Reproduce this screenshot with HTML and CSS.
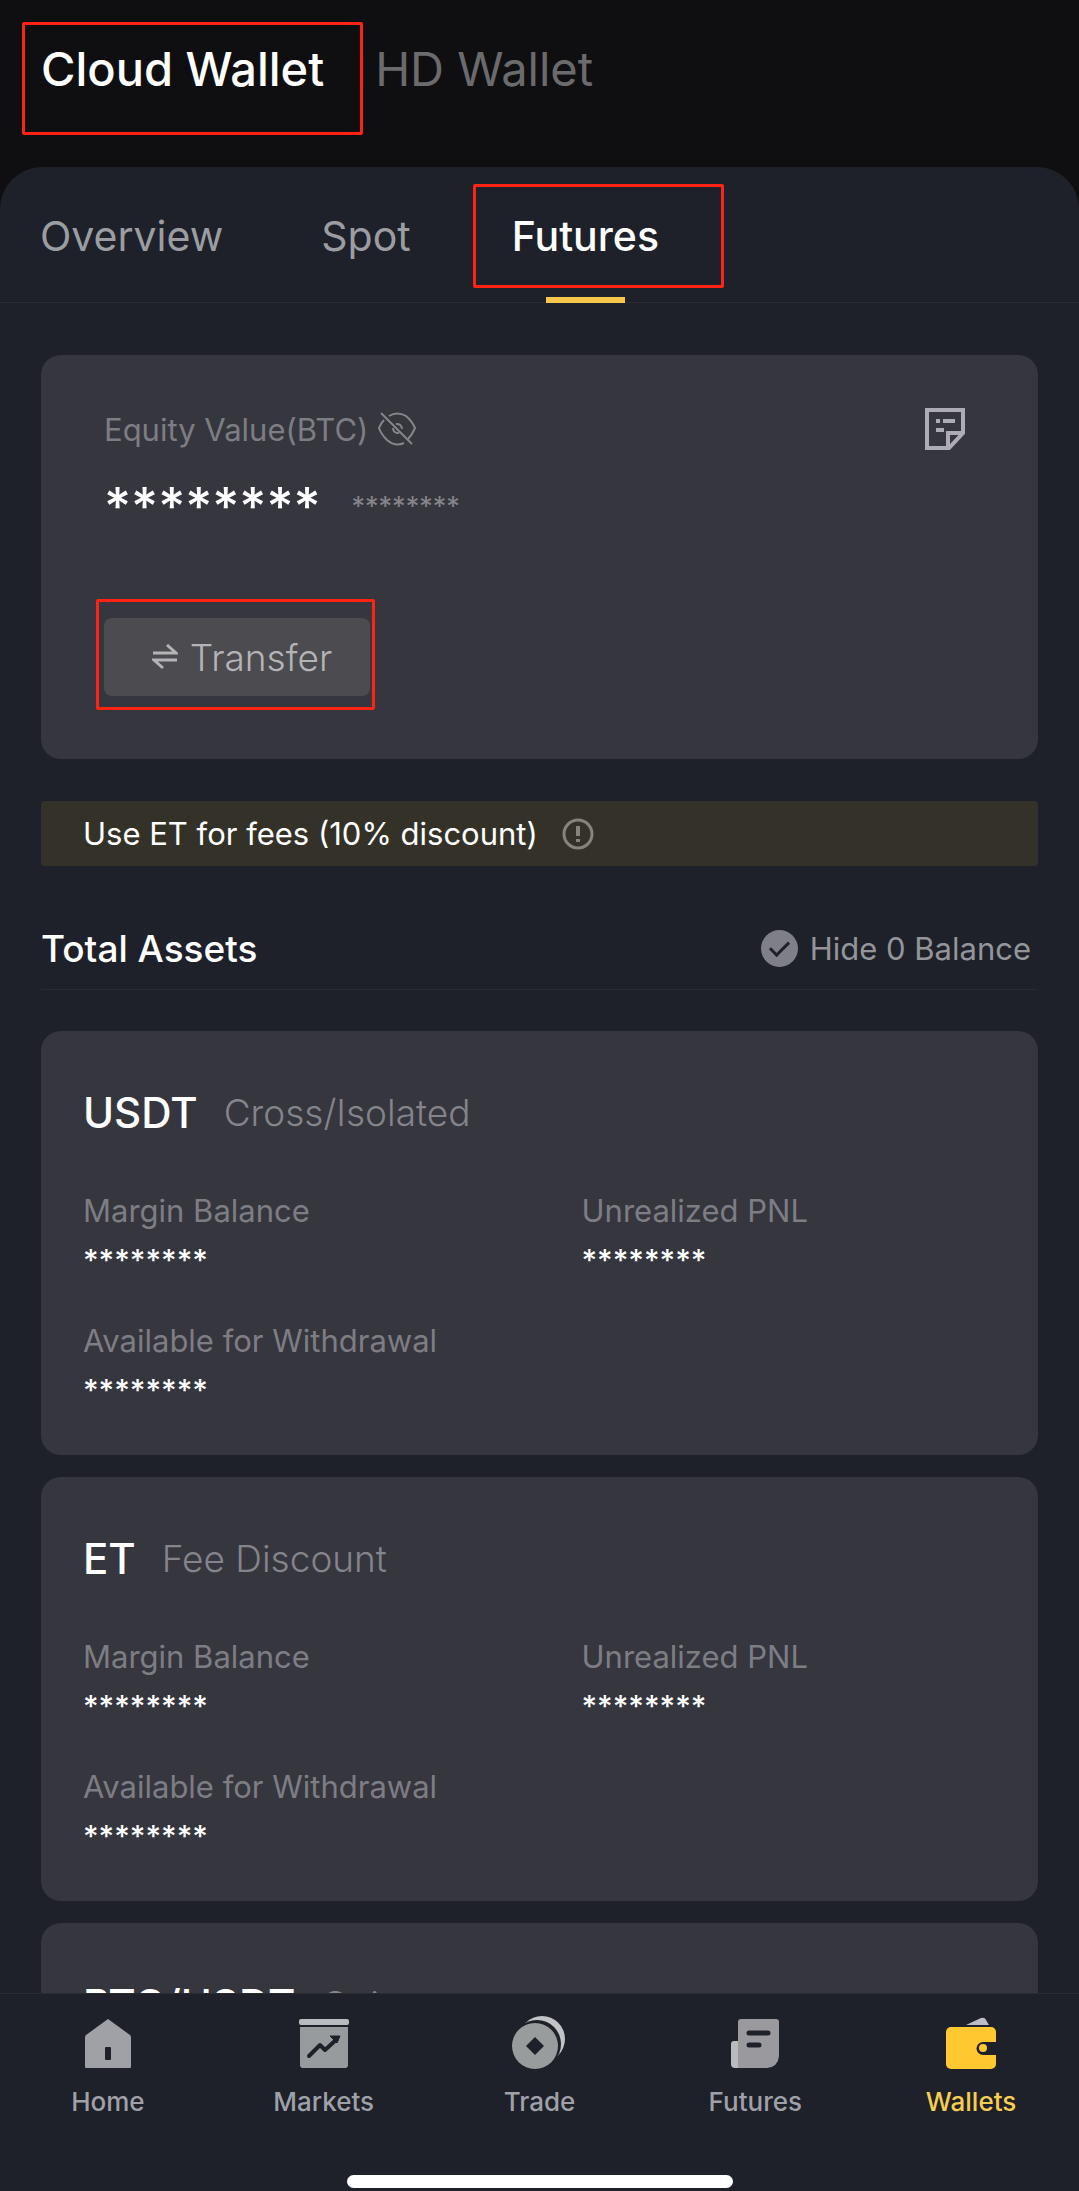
FILE: index.html
```html
<!DOCTYPE html>
<html lang="en">
<head>
  <meta charset="UTF-8" />
  <meta name="viewport" content="width=device-width, initial-scale=1.0"/>
  <title>Cloud Wallet - Futures</title>
  <link rel="stylesheet" href="styles.css">
</head>
<body>

  <header class="wallet-switch">
    <button class="wallet-btn active marked">Cloud Wallet</button>
    <button class="wallet-btn">HD Wallet</button>
  </header>

  <main class="sheet">
    <nav class="tabs">
      <a class="tab" href="#overview">Overview</a>
      <a class="tab" href="#spot">Spot</a>
      <a class="tab active" href="#futures"><span class="marked">Futures</span></a>
    </nav>

    <div class="content">
      <section class="equity">
        <div class="equity-head">
          <span>Equity Value(BTC)</span>
          <button class="icon-btn" aria-label="Show balance">
            <svg width="38" height="34" viewBox="0 0 38 34" fill="none" stroke="#85858c" stroke-width="2">
              <path d="M11 4 Q19 -1 28 4 Q34 9 37 16 Q34 23 30 27 M26 31 Q17 35 9 28 Q3 22 1 16 Q3 11 6 8"/>
              <path d="M18 12 A5 5 0 0 1 24 17 M21 21 A5 5 0 0 1 15 16"/>
              <path d="M3 1 L34 32"/>
            </svg>
          </button>
          <button class="icon-btn history" aria-label="History">
            <svg width="40" height="42" viewBox="0 0 40 42" fill="none" stroke="#adacb5" stroke-width="4">
              <path d="M2 2 H38 V25 L24 40 H2 Z"/>
              <path d="M23 40 V25 H38"/>
              <path d="M11 13 H15 M18 13 H30 M11 22 H19"/>
            </svg>
          </button>
        </div>
        <div class="equity-value">
          <span class="stars-lg">********</span>
          <span class="stars-sm">********</span>
        </div>
        <div class="transfer-wrap marked">
          <button class="transfer">
            <svg width="26" height="26" viewBox="0 0 26 26" fill="none" stroke="#b4b4b6" stroke-width="3">
              <path d="M1 9 H24 L15 1 M25 16 H2 L11 24"/>
            </svg>
            Transfer
          </button>
        </div>
      </section>

      <div class="fee-bar">
        <span>Use ET for fees (10% discount)</span>
        <button class="icon-btn" aria-label="Fee info">
          <svg width="32" height="32" viewBox="0 0 32 32" fill="none" stroke="#85837c">
            <circle cx="16" cy="16" r="14" stroke-width="3"/>
            <path d="M16 8 V18 M16 21 V24" stroke-width="4"/>
          </svg>
        </button>
      </div>

      <div class="assets-head">
        <h2>Total Assets</h2>
        <label class="hide-zero">
          <input type="checkbox" checked>
          <span>Hide 0 Balance</span>
        </label>
      </div>

      <section class="asset">
        <h3>USDT <small>Cross/Isolated</small></h3>
        <dl>
          <div><dt>Margin Balance</dt><dd>********</dd></div>
          <div><dt>Unrealized PNL</dt><dd>********</dd></div>
          <div><dt>Available for Withdrawal</dt><dd>********</dd></div>
        </dl>
      </section>

      <section class="asset">
        <h3>ET <small>Fee Discount</small></h3>
        <dl>
          <div><dt>Margin Balance</dt><dd>********</dd></div>
          <div><dt>Unrealized PNL</dt><dd>********</dd></div>
          <div><dt>Available for Withdrawal</dt><dd>********</dd></div>
        </dl>
      </section>

      <section class="asset">
        <h3>BTC/USDT <small>Coin</small></h3>
      </section>
    </div>
  </main>

  <footer class="bottom">
    <nav class="bottom-nav">
      <a href="#home">
        <svg width="56" height="56" viewBox="0 0 56 56">
          <path d="M28 3 L50 19 Q51 20 51 21 V51 Q51 52 50 52 H6 Q5 52 5 51 V21 Q5 20 6 19 Z" fill="#a0a1a6"/>
          <rect x="25" y="31" width="6" height="13" rx="1" fill="#1e2129"/>
        </svg>
        Home
      </a>
      <a href="#markets">
        <svg width="56" height="56" viewBox="0 0 56 56">
          <rect x="3" y="3" width="50" height="6" rx="2" fill="#b9bcbf"/>
          <path d="M4 11 H52 V49 Q52 52 49 52 H7 Q4 52 4 49 Z" fill="#989b9e"/>
          <path d="M13 40 L24 29 L29 34 L41 23" fill="none" stroke="#1e2129" stroke-width="4" stroke-linecap="round" stroke-linejoin="round"/>
          <path d="M34 20 H44 L41 27 Z" fill="#1e2129" stroke="#1e2129" stroke-linejoin="round"/>
        </svg>
        Markets
      </a>
      <a href="#trade">
        <svg width="56" height="56" viewBox="0 0 56 56">
          <circle cx="31" cy="23" r="23" fill="#c1c3c7"/>
          <circle cx="26" cy="28" r="24" fill="#1e2129"/>
          <circle cx="24" cy="30" r="23" fill="#989c9c"/>
          <path d="M24 21 L33 30 L24 39 L15 30 Z" fill="#1e2129"/>
        </svg>
        Trade
      </a>
      <a href="#futures">
        <svg width="56" height="56" viewBox="0 0 56 56">
          <path d="M4 28 Q4 25 7 25 H14 V52 H8 Q4 52 4 48 Z" fill="#b9bcbf"/>
          <path d="M11 6 Q11 3 14 3 H49 Q52 3 52 6 V40 Q51 51 40 52 H11 Z" fill="#9a9a9e"/>
          <path d="M22 17 H41 M22 29 H32" stroke="#1e2129" stroke-width="5" stroke-linecap="round"/>
        </svg>
        Futures
      </a>
      <a class="active" href="#wallets">
        <svg width="56" height="56" viewBox="0 0 56 56">
          <path d="M23 9 L38 2 Q42 1 43 4 L46 9 Z" fill="#bdbec5"/>
          <rect x="3" y="11" width="50" height="42" rx="5" fill="#ffc92f"/>
          <path d="M54 26 H40 A6 6 0 0 0 40 39 H54 Z" fill="#1e2129"/>
          <circle cx="40" cy="32" r="4" fill="#ffc92f"/>
        </svg>
        Wallets
      </a>
    </nav>
    <div class="home-indicator"></div>
  </footer>

</body>
</html>
```
FILE: styles.css
```css
* {
  box-sizing: border-box;
  font-family: Inter, 'Noto Sans', sans-serif;
}

body {
  margin: 0;
  background: #0f0f12;
  color: #fff;
  display: flex;
  flex-direction: column;
  height: 100vh;
  overflow: hidden;
}

button {
  background: none;
  border: none;
  padding: 0;
  color: inherit;
  cursor: pointer;
}

a {
  color: inherit;
  text-decoration: none;
}

svg {
  display: block;
  flex: none;
}

/* red call-out frame */
.marked {
  border: 3px solid #ff2313;
  border-radius: 2px;
}

.wallet-switch {
  display: flex;
  align-items: flex-start;
  gap: 12px;
  padding: 22px 22px 32px;
}

.wallet-btn {
  height: 113px;
  padding-bottom: 20px;
  font-size: 47px;
  line-height: 56px;
  color: #6b6b6d;
}

.wallet-btn.active {
  padding: 0 36px 20px 16px;
  color: #fff;
  font-weight: 500;
}

.sheet {
  flex: 1;
  min-height: 0;
  overflow: hidden;
  background: #1e2129;
  border-radius: 42px 42px 0 0;
}

.tabs {
  display: flex;
  padding-left: 40px;
  height: 136px;
  border-bottom: 1px solid #282b33;
  font-size: 41px;
  line-height: 98px;
  color: #9c9da3;
}

.tab {
  padding-top: 20px;
  margin-right: 98px;
}

.tab.active {
  color: #fff;
  font-weight: 500;
  margin: -3px 0 0 -36px;
}

.tab.active .marked {
  display: block;
  padding: 0 62px 0 36px;
}

.tab.active::after {
  content: '';
  display: block;
  width: 79px;
  height: 6px;
  margin: 9px 0 0 73px;
  background: #f5c84c;
}

.content {
  padding: 52px 41px 0;
}

.equity {
  padding: 53px 63px 49px;
  background: #36363f;
  border-radius: 20px;
}

.equity-head {
  display: flex;
  align-items: center;
  gap: 10px;
  height: 42px;
  font-size: 31px;
  color: #7d7d84;
}

.history {
  margin-left: auto;
  margin-right: 10px;
}

.equity-value {
  display: flex;
  align-items: center;
  gap: 31px;
  height: 84px;
  margin-top: 14px;
}

.stars-lg {
  font-size: 52px;
  font-weight: 500;
}

.stars-sm {
  font-size: 27px;
  color: #85858b;
}

.transfer-wrap {
  width: 279px;
  margin: 51px 0 0 -8px;
  padding: 16px 2px 11px 5px;
}

.transfer {
  display: flex;
  align-items: center;
  justify-content: center;
  gap: 12px;
  width: 100%;
  height: 78px;
  padding-left: 10px;
  background: #4b4b50;
  border-radius: 8px;
  font-size: 37px;
  font-weight: 300;
  color: #b4b4b6;
}

.fee-bar {
  display: flex;
  align-items: center;
  gap: 24px;
  height: 65px;
  margin-top: 42px;
  padding: 0 42px;
  background: #343228;
  border-radius: 4px;
  font-size: 31px;
}

.assets-head {
  display: flex;
  align-items: center;
  justify-content: space-between;
  height: 124px;
  padding: 42px 7px 0 0;
  border-bottom: 1px solid #282b33;
}

.assets-head h2 {
  margin: 0;
  font-size: 37px;
  font-weight: 500;
}

.hide-zero {
  display: flex;
  align-items: center;
  gap: 12px;
  font-size: 31px;
  color: #94959b;
}

.hide-zero input {
  appearance: none;
  display: grid;
  place-items: center;
  width: 37px;
  height: 37px;
  margin: 0;
  border-radius: 50%;
  background: #7f8087;
}

.hide-zero input:checked::before {
  content: '';
  width: 16px;
  height: 8px;
  margin-bottom: 5px;
  border-left: 3px solid #1e2129;
  border-bottom: 3px solid #1e2129;
  transform: rotate(-45deg);
}

.asset {
  margin-top: 22px;
  padding: 57px 0 46px;
  background: #36363f;
  border-radius: 20px;
}

.assets-head + .asset {
  margin-top: 41px;
}

.asset h3 {
  display: flex;
  align-items: center;
  gap: 26px;
  margin: 0;
  padding: 0 42px;
  font-size: 42px;
  line-height: 50px;
  font-weight: 500;
}

.asset small {
  font-size: 37px;
  font-weight: 300;
  color: #84848b;
}

.asset dl {
  display: grid;
  grid-template-columns: 1fr 1fr;
  row-gap: 42px;
  margin: 53px 0 0;
}

.asset dl div {
  padding-left: 42px;
}

.asset dt {
  font-size: 31px;
  line-height: 40px;
  color: #7d7d84;
}

.asset dd {
  margin: 10px 0 0;
  font-size: 30px;
  line-height: 38px;
  font-weight: 500;
}

.bottom {
  height: 198px;
  background: #1e2129;
  border-top: 1px solid #292a32;
}

.bottom-nav {
  display: flex;
  padding-top: 22px;
}

.bottom-nav a {
  flex: 1;
  display: flex;
  flex-direction: column;
  align-items: center;
  gap: 14px;
  font-size: 26px;
  line-height: 32px;
  font-weight: 500;
  color: #9fa0a8;
}

.bottom-nav a.active {
  color: #f8ce50;
}

.home-indicator {
  width: 386px;
  height: 13px;
  margin: 57px auto 0;
  border-radius: 7px;
  background: #fff;
}
```
